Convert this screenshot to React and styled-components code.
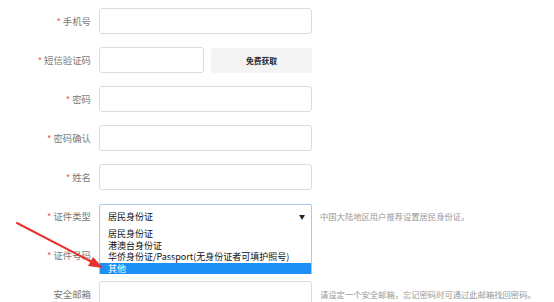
import React from "react";
import styled, { createGlobalStyle } from "styled-components";

const Global = createGlobalStyle`
  html, body { margin: 0; padding: 0; background: #fff; }
  body { font-family: "Noto Sans CJK SC", "Liberation Sans", sans-serif; overflow: hidden; }
`;

const Page = styled.div`
  position: relative;
  width: 554px;
  height: 302px;
  overflow: hidden;
  padding-top: 8px;
  box-sizing: border-box;
`;

const Form = styled.div`
  display: flex;
  flex-direction: column;
  gap: 13px;
`;

const Row = styled.div`
  position: relative;
  display: flex;
  align-items: center;
  height: 26px;
  & > * { flex-shrink: 0; }
`;

const Label = styled.div`
  width: 99px;
  padding-right: 8px;
  box-sizing: border-box;
  text-align: right;
  font-size: 9.4px;
  color: #777;
  white-space: nowrap;
`;

const Star = styled.span`
  color: #f06060;
  margin-right: 2px;
`;

const Input = styled.div`
  width: ${(p) => p.$w || 213}px;
  height: 26px;
  box-sizing: border-box;
  border: 1px solid #dcdcdc;
  border-radius: 3px;
  background: #fff;
`;

const Button = styled.div`
  margin-left: 7px;
  width: 101px;
  height: 25px;
  border-radius: 3px;
  background: #f4f4f4;
  display: flex;
  align-items: center;
  justify-content: center;
  font-size: 7.8px;
  font-weight: 700;
  color: #222;
`;

const Select = styled.div`
  width: 213px;
  height: 25px;
  box-sizing: border-box;
  border: 1px solid #a9c7ec;
  border-radius: 2px 2px 0 0;
  display: flex;
  align-items: center;
  justify-content: space-between;
  padding: 0 6px 0 8px;
  font-size: 9px;
  color: #111;
`;

const Caret = styled.span`
  font-size: 6px;
  color: #222;
`;

const Hint = styled.div`
  margin-left: 8px;
  font-size: 8.3px;
  color: #999;
  white-space: nowrap;
`;

const Menu = styled.div`
  position: absolute;
  left: 99px;
  top: 25px;
  width: 213px;
  box-sizing: border-box;
  border-left: 1px solid #a9c7ec;
  border-right: 1px solid #a9c7ec;
  background: #fff;
  z-index: 2;
`;

const Option = styled.div`
  height: 11.5px;
  line-height: 11.5px;
  padding-left: 8px;
  font-size: 9px;
  color: ${(p) => (p.$active ? "#fff" : "#111")};
  background: ${(p) => (p.$active ? "#1e8ff5" : "transparent")};
  white-space: nowrap;
`;

const ArrowLayer = styled.svg`
  position: absolute;
  left: 0;
  top: 0;
  width: 554px;
  height: 302px;
  pointer-events: none;
  z-index: 3;
`;

const fields = [
  { label: "手机号", star: true },
  { label: "短信验证码", star: true, code: true },
  { label: "密码", star: true },
  { label: "密码确认", star: true },
  { label: "姓名", star: true },
];

const options = ["居民身份证", "港澳台身份证", "华侨身份证/Passport(无身份证者可填护照号)", "其他"];

export default function App() {
  return (
    <>
      <Global />
      <Page>
        <Form>
          {fields.map((f) => (
            <Row key={f.label}>
              <Label>
                {f.star && <Star>*</Star>}
                {f.label}
              </Label>
              {f.code ? (
                <>
                  <Input $w={105} />
                  <Button>免费获取</Button>
                </>
              ) : (
                <Input />
              )}
            </Row>
          ))}
          <Row>
            <Label>
              <Star>*</Star>证件类型
            </Label>
            <Select>
              <span>居民身份证</span>
              <Caret>▼</Caret>
            </Select>
            <Hint>中国大陆地区用户推荐设置居民身份证。</Hint>
            <Menu>
              {options.map((o, i) => (
                <Option key={o} $active={i === 3}>
                  {o}
                </Option>
              ))}
            </Menu>
          </Row>
          <Row>
            <Label>
              <Star>*</Star>证件号码
            </Label>
            <Input />
          </Row>
          <Row>
            <Label>安全邮箱</Label>
            <Input />
            <Hint>请设定一个安全邮箱，忘记密码时可通过此邮箱找回密码。</Hint>
          </Row>
        </Form>
        <ArrowLayer viewBox="0 0 554 302">
          <line x1="17" y1="223" x2="91" y2="261.5" stroke="#e8302c" strokeWidth="2" strokeLinecap="round" />
          <polygon points="103,268 88,266 93,257" fill="#e8302c" />
        </ArrowLayer>
      </Page>
    </>
  );
}
